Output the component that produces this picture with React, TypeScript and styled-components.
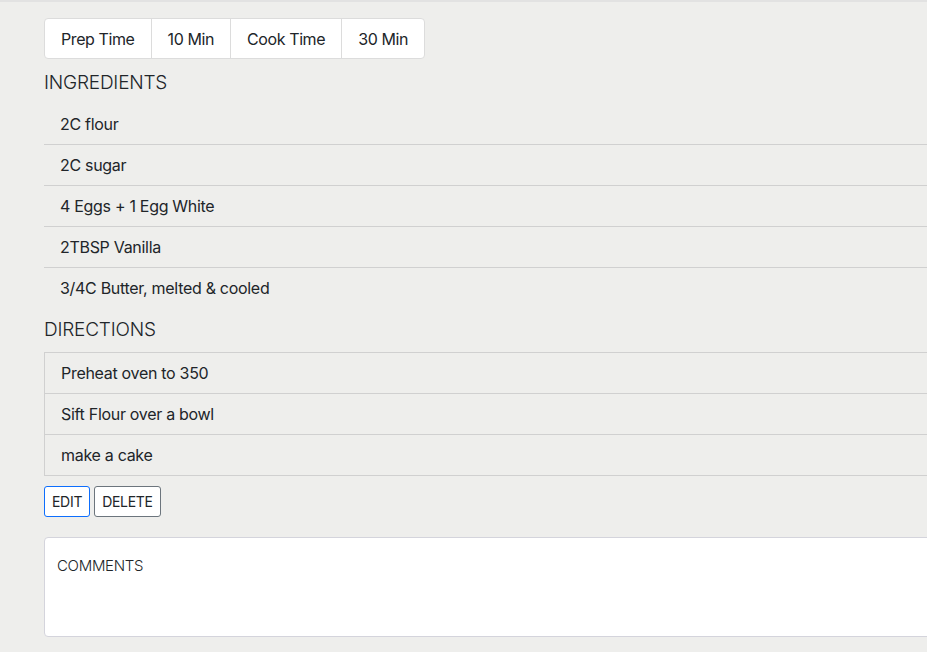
import React from "react";
import styled, { createGlobalStyle } from "styled-components";

const GlobalStyle = createGlobalStyle`
  html, body {
    margin: 0;
    padding: 0;
    overflow: hidden;
    background: #eeeeec;
  }
  body {
    font-family: "Inter", "Helvetica Neue", Arial, sans-serif;
    color: #212529;
    letter-spacing: -0.3px;
  }
  * { box-sizing: border-box; }
`;

const Page = styled.div`
  border-top: 2px solid #e2e2e2;
  min-height: 652px;
  padding: 16px 0 0 44px;
  width: 1100px;
`;

const TimeTable = styled.div`
  display: inline-flex;
  background: #ffffff;
  border: 1px solid #dcdcdc;
  border-radius: 4px;
  overflow: hidden;
`;

const TimeCell = styled.div<{ $last?: boolean }>`
  padding: 9px 16px 7px;
  font-size: 16px;
  line-height: 23px;
  letter-spacing: -0.4px;
  border-right: ${(p) => (p.$last ? "none" : "1px solid #dcdcdc")};
`;

const Heading = styled.h5`
  margin: 0;
  font-weight: 300;
  font-size: 19px;
  line-height: 23px;
  letter-spacing: -0.2px;
  color: #212529;
`;

const IngHeading = styled(Heading)`
  margin-top: 12px;
  margin-bottom: 10px;
`;

const DirHeading = styled(Heading)`
  margin-top: 10px;
  margin-bottom: 11px;
`;

const List = styled.ul<{ $bordered?: boolean }>`
  list-style: none;
  margin: 0;
  padding: 0;
  border: ${(p) => (p.$bordered ? "1px solid #d0d0d0" : "none")};
`;

const Item = styled.li`
  padding: 8px 16px;
  font-size: 16px;
  line-height: 24px;
  border-bottom: 1px solid #d0d0d0;
  &:last-child {
    border-bottom: none;
  }
`;

const Buttons = styled.div`
  display: flex;
  gap: 4px;
  margin-top: 10px;
`;

const Button = styled.button<{ $variant: "primary" | "secondary" }>`
  font-family: "Inter", "Helvetica Neue", Arial, sans-serif;
  font-size: 14px;
  letter-spacing: -0.3px;
  line-height: 19px;
  height: 31px;
  padding: 5px 7px;
  background: #ffffff;
  color: #212529;
  border-radius: 3px;
  border: 1px solid ${(p) => (p.$variant === "primary" ? "#0d6efd" : "#6c757d")};
  text-transform: uppercase;
  cursor: pointer;
`;

const CommentsCard = styled.div`
  margin-top: 20px;
  height: 100px;
  background: #ffffff;
  border: 1px solid #d4d4dc;
  border-radius: 4px;
  padding: 18px 12px;
`;

const CommentsTitle = styled.div`
  font-size: 15px;
  font-weight: 300;
  line-height: 20px;
  color: #212529;
`;

const ingredients = [
  "2C flour",
  "2C sugar",
  "4 Eggs + 1 Egg White",
  "2TBSP Vanilla",
  "3/4C Butter, melted & cooled",
];

const directions = ["Preheat oven to 350", "Sift Flour over a bowl", "make a cake"];

export default function App() {
  return (
    <>
      <GlobalStyle />
      <Page>
        <TimeTable>
          <TimeCell>Prep Time</TimeCell>
          <TimeCell>10 Min</TimeCell>
          <TimeCell>Cook Time</TimeCell>
          <TimeCell $last>30 Min</TimeCell>
        </TimeTable>
        <IngHeading>INGREDIENTS</IngHeading>
        <List>
          {ingredients.map((i) => (
            <Item key={i}>{i}</Item>
          ))}
        </List>
        <DirHeading>DIRECTIONS</DirHeading>
        <List $bordered>
          {directions.map((d) => (
            <Item key={d}>{d}</Item>
          ))}
        </List>
        <Buttons>
          <Button $variant="primary">Edit</Button>
          <Button $variant="secondary">Delete</Button>
        </Buttons>
        <CommentsCard>
          <CommentsTitle>COMMENTS</CommentsTitle>
        </CommentsCard>
      </Page>
    </>
  );
}
